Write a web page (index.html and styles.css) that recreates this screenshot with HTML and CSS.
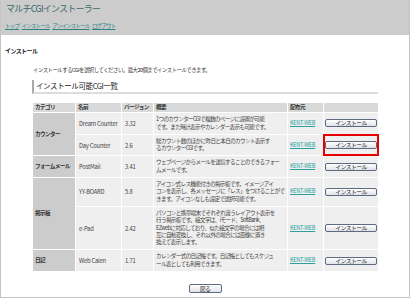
FILE: index.html
```html
<!DOCTYPE html>
<html lang="ja">
<head>
<meta charset="utf-8">
<title>マルチCGIインストーラー</title>
<link rel="stylesheet" href="styles.css">
</head>
<body>
<div class="page">
  <header class="top">
    <h1 class="title">マルチCGIインストーラー</h1>
    <nav class="nav">
      <a href="#">トップ</a>
      <a href="#">インストール</a>
      <a href="#">アンインストール</a>
      <a href="#">ログアウト</a>
    </nav>
  </header>
  <main class="main">
    <h2 class="heading">インストール</h2>
    <div class="section">
      <p class="msg">インストールするCGIを選択してください。最大20個までインストールできます。</p>
      <h3 class="sec-title">インストール可能CGI一覧</h3>
      <table class="list">
        <colgroup>
          <col class="c-cat"><col class="c-name"><col class="c-ver"><col class="c-desc"><col class="c-src"><col class="c-btn">
        </colgroup>
        <thead>
          <tr><th>カテゴリ</th><th>名前</th><th>バージョン</th><th>概要</th><th>配布元</th><th></th></tr>
        </thead>
        <tbody>
          <tr>
            <td class="cat" rowspan="2">カウンター</td>
            <td class="latin">Dream Counter</td>
            <td class="latin">3.32</td>
            <td class="desc">1つのカウンターCGIで複数のページに設置が可能<br>です。また時計表示やカレンダー表示も可能です。</td>
            <td class="src"><a href="#">KENT-WEB</a></td>
            <td class="act"><button class="btn">インストール</button></td>
          </tr>
          <tr>
            <td class="latin">Day Counter</td>
            <td class="latin">2.6</td>
            <td class="desc">総カウント数のほかに昨日と本日のカウント表示す<br>るカウンターCGIです。</td>
            <td class="src"><a href="#">KENT-WEB</a></td>
            <td class="act selected"><button class="btn">インストール</button></td>
          </tr>
          <tr>
            <td class="cat">フォームメール</td>
            <td class="latin">PostMail</td>
            <td class="latin">3.41</td>
            <td class="desc">ウェブページからメールを送信することのできるフォー<br>ムメールです。</td>
            <td class="src"><a href="#">KENT-WEB</a></td>
            <td class="act"><button class="btn">インストール</button></td>
          </tr>
          <tr>
            <td class="cat" rowspan="2">掲示板</td>
            <td class="latin">YY-BOARD</td>
            <td class="latin">5.8</td>
            <td class="desc">アイコン式レス機能付きの掲示板です。イメージアイ<br>コンを表示し、各メッセージに「レス」をつけることがで<br>きます。アイコンなしも設定で選択可能です。</td>
            <td class="src"><a href="#">KENT-WEB</a></td>
            <td class="act"><button class="btn">インストール</button></td>
          </tr>
          <tr>
            <td class="latin">e-Pad</td>
            <td class="latin">2.42</td>
            <td class="desc">パソコンと携帯端末でそれぞれ違うレイアウト表示を<br>行う掲示板です。絵文字は、iモード、SoftBank、<br>EZwebに対応しており、似た絵文字の場合には相<br>互に自動変換し、それ以外の場合には画像に置き<br>換えて表示します。</td>
            <td class="src"><a href="#">KENT-WEB</a></td>
            <td class="act"><button class="btn">インストール</button></td>
          </tr>
          <tr>
            <td class="cat">日記</td>
            <td class="latin">Web Calen</td>
            <td class="latin">1.71</td>
            <td class="desc">カレンダー式の日記帳です。日記帳としてもスケジュ<br>ール表としても利用できます。</td>
            <td class="src"><a href="#">KENT-WEB</a></td>
            <td class="act"><button class="btn">インストール</button></td>
          </tr>
        </tbody>
      </table>
      <div class="back"><button class="btn btn-back">戻る</button></div>
    </div>
  </main>
</div>
</body>
</html>
```
FILE: styles.css
```css
* { box-sizing: border-box; }
html, body { margin: 0; padding: 0; background: #fff; }
body {
  font-family: "Noto Sans CJK JP", "Noto Sans", sans-serif;
  color: #333;
}
.page {
  width: 410px;
  height: 298px;
  border: 1px solid #c4c4c4;
  border-top: 0;
  display: flex;
  flex-direction: column;
  overflow: hidden;
}
.top {
  background: #cccccc;
  height: 35px;
  padding: 3px 5px 0 5px;
  margin: 0 -1px;
}
.title {
  margin: 0;
  font-size: 9px;
  line-height: 12px;
  font-weight: normal;
  letter-spacing: -0.75px;
  color: #3a6a6a;
  padding-left: 1px;
}
.nav {
  display: flex;
  gap: 2.5px;
  margin-top: 7px;
  font-size: 5.5px;
  line-height: 8px;
  letter-spacing: -0.8px;
}
.nav a { color: #2f8585; text-decoration: underline; }
.main {
  flex: 1;
  padding: 11px 4px 0 4px;
}
.heading {
  margin: 0;
  font-size: 6px;
  line-height: 9px;
  font-weight: bold;
  letter-spacing: -0.6px;
  color: #222;
}
.section {
  padding: 0 27px;
}
.msg {
  margin: 11px 0 0 1px;
  font-size: 5.4px;
  line-height: 8px;
  letter-spacing: -0.5px;
  color: #333;
}
.sec-title {
  margin: 6px 0 0 0;
  font-size: 7.5px;
  line-height: 10px;
  font-weight: normal;
  letter-spacing: -0.4px;
  color: #222;
  border-left: 2px solid #a8a8a8;
  border-bottom: 2px solid #dddddd;
  padding: 1px 0 1px 2px;
}
.list {
  margin-top: 8px;
  width: 347px;
  border-collapse: separate;
  border-spacing: 1px;
  table-layout: fixed;
  font-size: 5.6px;
  line-height: 7.3px;
}
.c-cat { width: 42px; }
.c-name { width: 45px; }
.c-ver { width: 31px; }
.c-desc { width: 133px; }
.c-src { width: 35px; }
.c-btn { width: 54px; }
.list th {
  background: #d9d9d9;
  text-align: left;
  font-weight: bold;
  padding: 1px 1px 1px 2px;
  letter-spacing: -0.6px;
  white-space: nowrap;
  color: #333;
}
.list td {
  background: #efefef;
  padding: 3px 1px 3px 3px;
  vertical-align: middle;
  color: #444;
}
.list td.cat {
  background: #cccccc;
  font-weight: bold;
  letter-spacing: -0.6px;
  padding-left: 2px;
  white-space: nowrap;
  color: #333;
}
.list td.latin { letter-spacing: -0.2px; padding-left: 3px; white-space: nowrap; font-size: 5.8px; }
.list td.desc { letter-spacing: -0.65px; white-space: nowrap; padding-left: 2px; }
.list td.src { padding-left: 2px; }
.list td.src a {
  color: #2aa0a0;
  text-decoration: underline;
  letter-spacing: -0.3px;
  font-size: 5.6px;
}
.list td.act { text-align: center; padding: 2px 1px; }
.list td.selected { outline: 2px solid #e60000; outline-offset: -1px; }
.btn {
  font-family: inherit;
  font-size: 5.8px;
  line-height: 6px;
  letter-spacing: -0.5px;
  width: 52px;
  height: 8px;
  padding: 0;
  border: 1px solid #5e6a82;
  border-radius: 2px;
  background: linear-gradient(#ffffff, #e2e3ea);
  color: #222;
}
.back {
  display: flex;
  justify-content: center;
  margin-top: 12px;
}
.btn-back { width: 33px; height: 9px; }
```
